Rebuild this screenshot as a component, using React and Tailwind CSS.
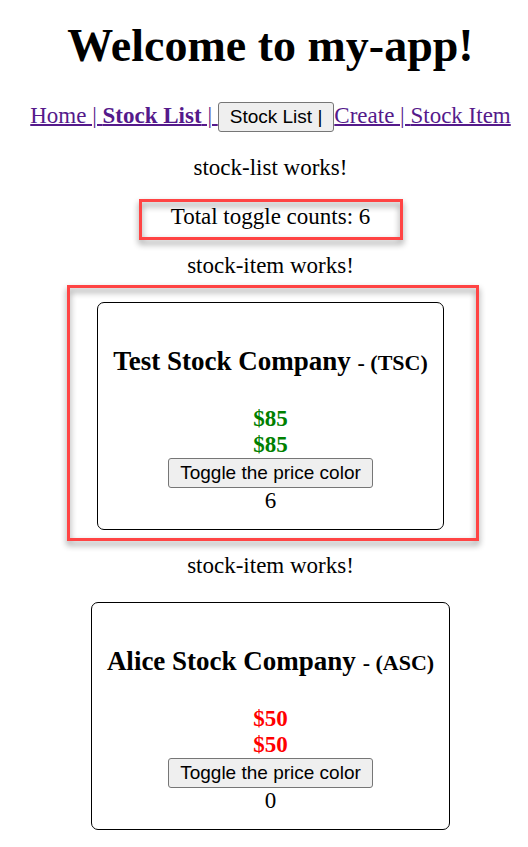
import { useState } from "react";

const linkClass = "text-[#551a8b] underline decoration-2";
const buttonClass =
  "h-[30px] rounded-[3px] border border-[#767676] bg-[#efefef] px-[11px] align-baseline font-['Liberation_Sans',sans-serif] text-[19px] leading-[22px] text-black";

function Callout({ inset }) {
  return (
    <div
      aria-hidden="true"
      className={`pointer-events-none absolute border-[3px] border-[#ff4444] drop-shadow-[0_4px_3px_rgba(0,0,0,0.45)] ${inset}`}
    />
  );
}

function StockItem({ name, code, price, initialCount, positive, callout }) {
  const [count, setCount] = useState(initialCount);
  const [up, setUp] = useState(positive);
  const priceColor = up ? "text-[#008000]" : "text-[#ff0000]";

  const toggle = () => {
    setUp(!up);
    setCount(count + 1);
  };

  return (
    <section className="mb-[23px] flex flex-col items-center">
      <p className="mb-[23px]">stock-item works!</p>
      <div className="relative">
        <div className="rounded-[7px] border border-black p-[15px]">
          <h3 className="my-[27px] text-[27px] leading-[32px] font-bold">
            {name} <small className="text-[22px]">- ({code})</small>
          </h3>
          <div className={`font-bold ${priceColor}`}>${price}</div>
          <div className={`font-bold ${priceColor}`}>${price}</div>
          <button type="button" onClick={toggle} className={`${buttonClass} block mx-auto`}>
            Toggle the price color
          </button>
          <div>{count}</div>
        </div>
        {callout && <Callout inset="-top-[17px] -bottom-[11px] -left-[30px] -right-[35px]" />}
      </div>
    </section>
  );
}

export default function App() {
  return (
    <main className="min-h-screen bg-white pt-5 pl-[13px] text-center font-['Liberation_Serif',serif] text-[23px] leading-[26px] text-black">
      <h1 className="mb-[30px] text-[46px] leading-[52px] font-bold">Welcome to my-app!</h1>
      <nav className="mb-[23px] h-[30px] whitespace-nowrap">
        <a href="#home" className={linkClass}>Home | </a>
        <a href="#stocks" className={linkClass}>
          <strong>Stock List</strong> |{" "}
        </a>
        <button type="button" className={buttonClass}>Stock List | </button>
        <a href="#create" className={linkClass}>Create | </a>
        <a href="#item" className={linkClass}>Stock Item</a>
      </nav>
      <p className="mb-[23px]">stock-list works!</p>
      <div className="mb-[23px] flex justify-center">
        <p className="relative">
          Total toggle counts: 6
          <Callout inset="-top-[5px] -bottom-[10px] -left-8 -right-[33px]" />
        </p>
      </div>
      <StockItem name="Test Stock Company" code="TSC" price={85} initialCount={6} positive callout />
      <StockItem name="Alice Stock Company" code="ASC" price={50} initialCount={0} positive={false} />
    </main>
  );
}
